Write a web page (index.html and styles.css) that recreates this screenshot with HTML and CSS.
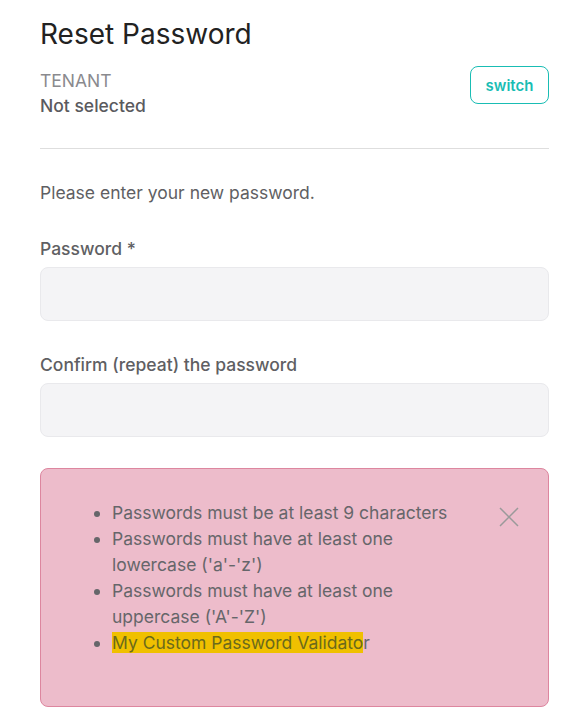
FILE: index.html
```html
<!DOCTYPE html>
<html lang="en">
<head>
    <meta charset="UTF-8">
    <meta name="viewport" content="width=device-width, initial-scale=1.0">
    <title>Reset Password</title>
    <link rel="stylesheet" href="styles.css">
</head>
<body>

    <div class="page">
        <h1>Reset Password</h1>

        <div class="tenant-row">
            <div class="tenant">
                <div class="tenant-label">TENANT</div>
                <div class="tenant-name">Not selected</div>
            </div>
            <button class="switch-btn">switch</button>
        </div>

        <hr class="divider">

        <p class="intro">Please enter your new password.</p>

        <div class="field">
            <label for="password">Password *</label>
            <input type="password" id="password">
        </div>

        <div class="field">
            <label for="confirm">Confirm (repeat) the password</label>
            <input type="password" id="confirm">
        </div>

        <div class="alert">
            <ul class="errors">
                <li>Passwords must be at least 9 characters</li>
                <li>Passwords must have at least one lowercase ('a'-'z')</li>
                <li>Passwords must have at least one uppercase ('A'-'Z')</li>
                <li><mark>My Custom Password Validato</mark>r</li>
            </ul>
            <button class="close-btn" aria-label="Close">
                <svg width="20" height="20" viewBox="0 0 20 20">
                    <path d="M1 1 L19 19 M19 1 L1 19" stroke="#9a9a9a" stroke-width="1.5" fill="none"/>
                </svg>
            </button>
        </div>
    </div>

</body>
</html>
```

FILE: styles.css
```css
body {
    margin: 0;
    font-family: Inter, "Noto Sans", sans-serif;
    font-size: 17.5px;
    line-height: 24px;
    color: #5f5f63;
    background: #ffffff;
}
.page {
    padding: 14px 24px 0 40px;
}
h1 {
    margin: 0;
    font-size: 28px;
    font-weight: 400;
    line-height: 40px;
    color: #222222;
}
.tenant-row {
    display: flex;
    justify-content: space-between;
    align-items: flex-start;
    margin-top: 14px;
}
.tenant {
    line-height: 25px;
}
.tenant-label {
    color: #8a8a8e;
}
.tenant-name {
    font-weight: 500;
    color: #5a5a5e;
}
.switch-btn {
    margin-top: -2px;
    width: 79px;
    height: 38px;
    background: #ffffff;
    border: 1px solid #19bdb4;
    border-radius: 8px;
    color: #19bdb4;
    font-family: inherit;
    font-size: 15px;
    font-weight: 600;
    cursor: pointer;
}
.divider {
    margin: 30px 0 0;
    border: none;
    border-top: 1px solid #dedede;
}
.intro {
    margin: 32px 0 0;
}
.field {
    margin-top: 32px;
}
.field label {
    display: block;
    font-weight: 500;
    margin-bottom: 6px;
}
.field input {
    display: block;
    box-sizing: border-box;
    width: 100%;
    height: 54px;
    background: #f4f4f6;
    border: 1px solid #e9e9ec;
    border-radius: 8px;
}
.alert {
    display: flex;
    align-items: flex-start;
    margin-top: 31px;
    box-sizing: border-box;
    height: 239px;
    padding: 31px 19px 0 31px;
    background: #edbccb;
    border: 1px solid #dd869f;
    border-radius: 8px;
}
.errors {
    flex: 1;
    margin: 0;
    padding-left: 40px;
    line-height: 26px;
    color: #66666a;
}
mark {
    background: #f0c000;
    color: #6b6a1c;
}
.close-btn {
    width: 40px;
    height: 26px;
    margin-top: 4px;
    margin-left: 30px;
    padding: 0;
    background: none;
    border: none;
    display: flex;
    align-items: center;
    justify-content: center;
    cursor: pointer;
}
```
